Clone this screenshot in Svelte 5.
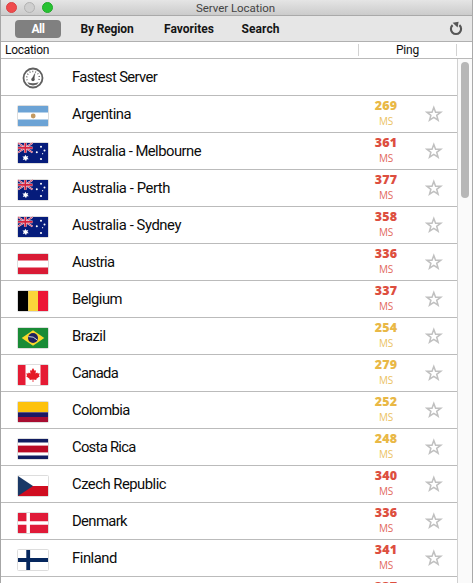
<script>
  const servers = [
    ['Fastest Server', 'gauge', null, 85],
    ['Argentina', 'ar', 269, 59],
    ['Australia - Melbourne', 'au', 361, 129],
    ['Australia - Perth', 'au', 377, 98],
    ['Australia - Sydney', 'au', 358, 109],
    ['Austria', 'at', 336, 42.5],
    ['Belgium', 'be', 337, 50],
    ['Brazil', 'br', 254, 33.5],
    ['Canada', 'ca', 279, 46],
    ['Colombia', 'co', 252, 57.5],
    ['Costa Rica', 'cr', 248, 63.5],
    ['Czech Republic', 'cz', 340, 94],
    ['Denmark', 'dk', 336, 55],
    ['Finland', 'fi', 341, 45],
    ['', '', 337, 0],
  ];
  const tabs = [['All', 13], ['By Region', 53], ['Favorites', 50], ['Search', 38]];

  // Spread the letters so that each label takes exactly its set width.
  function fit(node, width) {
    node.style.letterSpacing = '0px';
    const natural = node.getBoundingClientRect().width;
    node.style.letterSpacing = `${(width - natural) / node.textContent.length}px`;
  }
</script>

<div class="window">
  <header class="titlebar">
    <div class="lights"><i class="close"></i><i class="min"></i><i class="max"></i></div>
    <span class="title"><span use:fit={79}>Server Location</span></span>
  </header>
  <nav class="toolbar">
    {#each tabs as [name, w], i}
      <button class="tab tab{i}" class:active={i === 0}><span use:fit={w}>{name}</span></button>
    {/each}
    <svg class="refresh" width="14" height="15" viewBox="0 0 14 15">
      <path d="M10.4 4.1A5.1 5.1 0 1 1 3.6 4.1" fill="none" stroke="#555" stroke-width="2.1" />
      <path d="M3.6 1.8 9.6 .8 8.6 6.4Z" fill="#555" />
    </svg>
  </nav>
  <div class="columns">
    <span class="col-loc"><span use:fit={44}>Location</span></span>
    <span class="col-ping"><span use:fit={23}>Ping</span></span>
    <span class="col-end"></span>
  </div>
  <main class="body">
    <div class="list">
      {#each servers as [name, flag, ping, w]}
        <div class="row">
          <div class="icon">
            {#if flag === 'gauge'}
              <svg class="gauge" width="22" height="22" viewBox="0 0 22 22">
                <circle cx="11" cy="11" r="9.5" fill="#fff" stroke="#606060" stroke-width="1.8" />
                <path d="M5.2 13.2A6.3 6.3 0 1 1 16.8 13.2" fill="none" stroke="#666" stroke-width="1.4" stroke-dasharray="1 1.9" />
                <path d="M10 12 12.8 6.6 12 12.6Z" fill="#444" stroke="#555" stroke-width=".5" />
                <circle cx="11" cy="12.5" r="1.7" fill="#555" />
                <path d="M5.4 15.3Q11 17 16.6 15.3L15 17.6Q11 19.2 7 17.6Z" fill="#606060" />
              </svg>
            {:else if flag}
              <svg class="flag" width="32" height="22" viewBox="-1 -1 32 22">
                <rect x="-.5" y="-.5" width="31" height="21" rx="1" fill="#fff" stroke="#ddd" />
                {#if flag === 'ar'}
                  <path d="M0 0H30V6.5H0ZM0 13.5H30V20H0Z" fill="#6ca3d5" />
                  <circle cx="15.2" cy="10" r="2.4" fill="#c39a62" />
                {:else if flag === 'au'}
                  <rect width="30" height="20" fill="#061c7b" />
                  <path d="M0 0 14.5 9.5M14.5 0 0 9.5" stroke="#f3dce6" stroke-width="2" />
                  <path d="M0 0 14.5 9.5M14.5 0 0 9.5" stroke="#d6324f" stroke-width=".9" />
                  <path d="M7.3 0V9.8M0 4.8H14.5" stroke="#f6dfe6" stroke-width="2.7" />
                  <path d="M7.3 0V9.8M0 4.8H14.5" stroke="#d6213d" stroke-width="1.7" />
                  <path d="M7.5 11.7 8.3 13.5 10.3 13 9.4 14.8 10.8 16.2 8.8 16.3 8 18.2 6.8 16.6 4.8 17 5.7 15.1 4.4 13.6 6.5 13.6Z" fill="#fff" />
                  <g fill="#fff"><circle cx="23" cy="3.8" r="1" /><circle cx="18.8" cy="9.3" r="1" /><circle cx="26.5" cy="7.5" r="1" /><circle cx="24.6" cy="10.7" r=".6" /><circle cx="23" cy="16" r="1.1" /></g>
                {:else if flag === 'at'}
                  <path d="M0 0H30V6.6H0ZM0 13.4H30V20H0Z" fill="#d91b35" />
                {:else if flag === 'be'}
                  <rect width="10.3" height="20" fill="#000" /><rect x="10.3" width="9.7" height="20" fill="#fbd43a" /><rect x="20" width="10" height="20" fill="#ec1535" />
                {:else if flag === 'br'}
                  <rect width="30" height="20" fill="#198b36" />
                  <path d="M15 2.3 26.3 10 15 17.7 3.7 10Z" fill="#f9d72c" />
                  <circle cx="15" cy="10" r="5" fill="#20205f" />
                  <path d="M10.4 8.6Q15.5 8 19.3 12" fill="none" stroke="#c9d7d4" stroke-width="1" />
                {:else if flag === 'ca'}
                  <path d="M0 0H7.5V20H0ZM22.5 0H30V20H22.5Z" fill="#e51b34" />
                  <path d="M15 3 16.6 5.8 18 5.2 17.5 8.6 19.3 7.4 19.8 8.5 21.7 8.3 21 10.5 21.8 11.2 18.2 14 18.5 15 15.4 14.6V17H14.6V14.6L11.5 15 11.8 14 8.2 11.2 9 10.5 8.3 8.3 10.2 8.5 10.7 7.4 12.5 8.6 12 5.2 13.4 5.8Z" fill="#e51b25" />
                {:else if flag === 'co'}
                  <rect width="30" height="10.3" fill="#fdc20d" /><rect y="10.3" width="30" height="4.7" fill="#1c1865" /><rect y="15" width="30" height="5" fill="#a80d31" />
                {:else if flag === 'cr'}
                  <path d="M0 0H30V3.5H0ZM0 16.6H30V20H0Z" fill="#101d60" /><rect y="6.6" width="30" height="6.8" fill="#b90a25" />
                {:else if flag === 'cz'}
                  <rect y="10" width="30" height="10" fill="#d00d20" /><path d="M0 0 15 10 0 20Z" fill="#1a3866" />
                {:else if flag === 'dk'}
                  <rect width="30" height="20" fill="#e01a38" /><path d="M10.2 0V20M0 10H30" stroke="#fff" stroke-width="3.5" />
                {:else if flag === 'fi'}
                  <path d="M10.2 0V20M0 10H30" stroke="#06275e" stroke-width="3.8" />
                {/if}
              </svg>
            {/if}
          </div>
          <div class="name">{#if name}<span use:fit={w}>{name}</span>{/if}</div>
          {#if ping}
            <div class="ping" class:fair={ping < 300}>
              <b use:fit={22.5}>{ping}</b>
              {#if name}<small use:fit={14}>MS</small>{/if}
            </div>
            {#if name}
              <svg class="star" width="18" height="18" viewBox="0 0 18 18">
                <path d="M8.8 2.4 10.6 7.2H15.8L11.7 10.3 13.1 15.2 8.8 12.3 4.5 15.2 5.9 10.3 1.8 7.2H7Z" fill="#fff" stroke="#c0c0c0" stroke-width="1.5" />
              </svg>
            {/if}
          {/if}
        </div>
      {/each}
    </div>
    <div class="track"><div class="thumb"></div></div>
  </main>
</div>

<style>
  :global(body) { margin: 0; overflow: hidden; }
  .window {
    box-sizing: border-box; width: 473px; height: 583px; overflow: hidden;
    display: flex; flex-direction: column; background: #fff; color: #111;
    border-left: 1px solid #a6a6a6; border-right: 1px solid #aaa;
    font-family: Roboto, "Liberation Sans", sans-serif;
  }
  span, b, small { white-space: nowrap; }
  .name span, .tab span, .title span, .col-loc span, .col-ping span, b, small { display: inline-block; }
  .titlebar {
    flex: none; box-sizing: border-box; height: 16px; display: flex;
    background: linear-gradient(#e5e5e5, #cbcbcb); border-bottom: 1px solid #a9a9a9;
  }
  .lights { display: flex; gap: 7px; padding: 2px 0 0 5px; width: 190px; }
  .lights i { box-sizing: border-box; width: 11px; height: 11px; border-radius: 50%; }
  .close { background: #f04b4d; border: 1px solid #d94244; }
  .min { background: #cfcfcf; border: 1px solid #b2b2b2; }
  .max { background: #27c232; border: 1px solid #20aa2a; }
  .title { font-size: 11.5px; line-height: 17px; color: #444; }
  .toolbar {
    flex: none; box-sizing: border-box; height: 26px; display: flex; align-items: center;
    background: #e6e6e6; border-bottom: 1px solid #b0b0b0; padding-left: 14px;
  }
  .tab {
    border: 0; background: none; padding: 0; height: 18px; border-radius: 4px; color: #151515;
    font: 700 12px/19px Roboto, "Liberation Sans", sans-serif; text-align: left;
  }
  .tab0 { width: 46px; text-align: center; }
  .tab1 { margin-left: 19.5px; width: 83.5px; }
  .tab2 { width: 77.5px; }
  .active { background: #808080; color: #fff; }
  .refresh { margin-left: auto; margin-right: 9.5px; }
  .columns { flex: none; box-sizing: border-box; height: 17px; display: flex; align-items: center; font-size: 12px; line-height: 16px; border-bottom: 1px solid #b9b9b9; }
  .col-loc { width: 353px; padding-left: 4px; }
  .col-ping { height: 12px; line-height: 12px; border-left: 1px solid #d2d2d2; padding-left: 37px; width: 60px; }
  .col-end { border-left: 1px solid #d2d2d2; height: 12px; flex: 1; }
  .body { display: flex; flex: 1; min-height: 0; }
  .list { width: 456px; overflow: hidden; }
  .row { box-sizing: border-box; height: 37px; border-bottom: 1px solid #bbb; display: flex; }
  .icon { width: 71px; box-sizing: border-box; padding: 9px 0 0 16px; }
  .icon svg { display: block; }
  .icon .gauge { margin: -1px 0 0 5px; }
  .name { width: 302px; font-size: 14.8px; line-height: 36px; color: #0c0c0c; }
  .ping {
    width: 24px; display: flex; flex-direction: column; align-items: center; color: #dd4f3f;
    font-family: "Open Sans", "Noto Sans", sans-serif;
  }
  .fair { color: #e9b846; }
  b { font-size: 12.5px; font-weight: 800; line-height: 18px; margin-top: 1px; }
  small { font-size: 10px; font-weight: 400; line-height: 13px; opacity: .85; }
  .star { margin: 9px 0 0 26.5px; }
  .track { flex: 1; background: #fafafa; border-left: 1px solid #d0d0d0; }
  .thumb { width: 8px; height: 136px; margin: 3px 0 0 3px; border-radius: 4px; background: #b7b7b7; }
</style>
